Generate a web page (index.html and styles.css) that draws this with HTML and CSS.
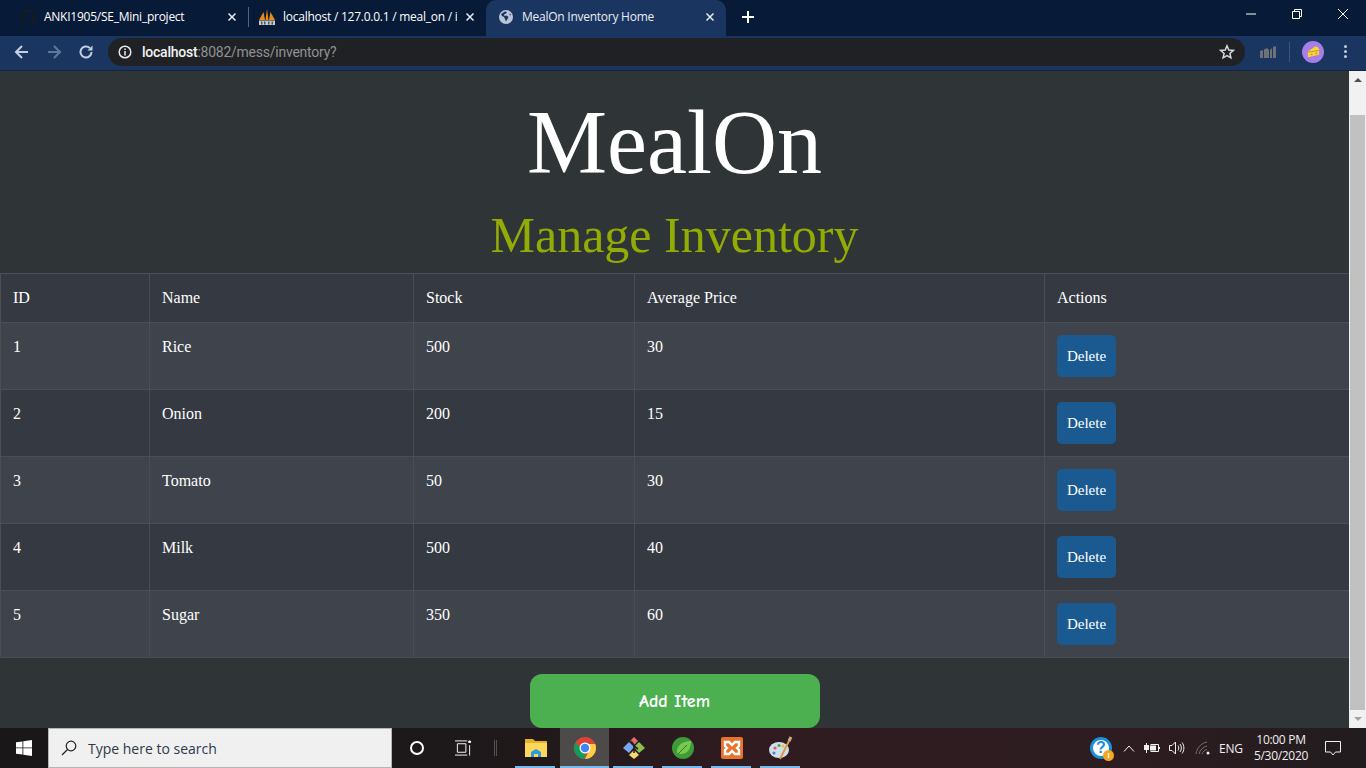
FILE: index.html
```html
<!DOCTYPE html>
<html lang="en">
<head>
<meta charset="utf-8">
<title>MealOn Inventory Home</title>
<link rel="stylesheet" href="styles.css">
</head>
<body>
<div class="screen">
  <header class="tabbar">
    <div class="tab tab-first">
      <svg class="tab-icon" viewBox="0 0 16 16"><path fill="#161b22" d="M8 0a8 8 0 0 0-2.500 15.600c.4.100.5-.2.5-.4v-1.400c-2.200.5-2.700-1-2.700-1-.4-.9-.9-1.200-.9-1.200-.7-.5.100-.5.100-.5.800.100 1.200.8 1.200.8.700 1.200 1.900.9 2.300.7.100-.5.300-.9.500-1.100-1.800-.2-3.600-.9-3.600-4 0-.9.300-1.600.800-2.100-.1-.2-.4-1 .1-2.100 0 0 .7-.2 2.200.8a7.600 7.600 0 0 1 4 0c1.500-1 2.200-.8 2.200-.8.400 1.100.200 1.900.100 2.100.500.600.800 1.300.800 2.100 0 3.100-1.900 3.700-3.700 3.900.300.300.600.800.600 1.500v2.200c0 .2.100.5.600.4A8 8 0 0 0 8 0z"/></svg>
      <span class="tab-title">ANKI1905/SE_Mini_project</span>
      <svg class="tab-close" viewBox="0 0 10 10"><path d="M1.500 1.500l7 7M8.500 1.500l-7 7"/></svg>
    </div>
    <div class="tab-sep"></div>
    <div class="tab tab-second">
      <svg class="tab-icon" viewBox="0 0 16 16"><path fill="#e98a15" d="M0 11 4.500 3 6 11zM6.500 11 8 0l1.500 11zM10 11l1.500-8L16 11z"/><path fill="#c9c9c9" d="M0 11.500h16V16H0z"/><path fill="#4d5462" d="M2 12.500h1.500v3H2zM5 12.500h1.500v3H5zM9 12.500h1.500v3H9zM12.500 12.500H14v3h-1.500z"/></svg>
      <span class="tab-title tab-fade">localhost / 127.0.0.1 / meal_on / i</span>
      <svg class="tab-close" viewBox="0 0 10 10"><path d="M1.500 1.500l7 7M8.500 1.500l-7 7"/></svg>
    </div>
    <div class="tab tab-active">
      <svg class="tab-icon" viewBox="0 0 16 16"><circle cx="8" cy="8" r="7" fill="#b9c6d9"/><path fill="#1a3560" d="M7 2.500 3 5l1 2 2 1 1 2 1 2.500 1.500-2.500 1-2-2-1.500-2 .5-.5-1.500 2-1 1-1.500zM12 4l1 2.500-1.500-.5z"/></svg>
      <span class="tab-title">MealOn Inventory Home</span>
      <svg class="tab-close" viewBox="0 0 10 10"><path d="M1.500 1.500l7 7M8.500 1.500l-7 7"/></svg>
    </div>
    <svg class="new-tab" viewBox="0 0 12 12"><path d="M6 0v12M0 6h12"/></svg>
    <div class="window-controls">
      <svg viewBox="0 0 12 12"><path d="M1 6h10"/></svg>
      <svg viewBox="0 0 12 12"><path d="M1.500 3.500h7v7h-7zM3.500 3.500v-2h7v7h-2"/></svg>
      <svg viewBox="0 0 12 12"><path d="M1 1l10 10M11 1 1 11"/></svg>
    </div>
  </header>

  <nav class="toolbar">
    <svg class="nav-icon" viewBox="0 0 16 16"><path d="M14 8H2.500M8 2 2 8l6 6"/></svg>
    <svg class="nav-icon nav-dim" viewBox="0 0 16 16"><path d="M2 8h11.500M8 2l6 6-6 6"/></svg>
    <svg class="nav-icon" viewBox="0 0 16 16"><path d="M13.500 8A5.500 5.500 0 1 1 11.800 4"/><path class="solid" d="M14.500 1.500v5h-5z"/></svg>
    <div class="omnibox">
      <svg class="info-icon" viewBox="0 0 14 14"><circle cx="7" cy="7" r="5.800"/><path d="M7 6v4.500M7 3.500v1.500"/></svg>
      <span class="url"><b>localhost</b>:8082/mess/inventory?</span>
      <svg class="star-icon" viewBox="0 0 16 16"><path d="M8 1.800 9.800 6l4.500.4-3.400 3 1 4.400L8 11.500l-3.900 2.300 1-4.400-3.400-3L6.200 6z"/></svg>
    </div>
    <svg class="ext-icon" viewBox="0 0 16 12"><path fill="#6d7278" d="M0 5l3-1v8H0zM4 3.500l3-1.500 2 2v8H4zM10 4l2-2v10h-2zM13 1l3-1v12h-3z"/></svg>
    <div class="toolbar-sep"></div>
    <div class="avatar">
      <svg viewBox="0 0 16 16"><path fill="#f5d33c" d="M2 8 10 2.500c2.500.5 4 2 4 4v5l-12 2.500z"/><path fill="#c99a1c" d="M2 8l12-1.500v1L2 9z"/><circle cx="6" cy="11" r="1" fill="#c99a1c"/><circle cx="11" cy="10" r="1" fill="#c99a1c"/></svg>
    </div>
    <div class="kebab"><i></i><i></i><i></i></div>
  </nav>

  <div class="viewport">
    <main class="page">
      <h1 class="brand">MealOn</h1>
      <h2 class="subtitle">Manage Inventory</h2>
      <table class="inventory">
        <colgroup>
          <col class="col-id"><col class="col-name"><col class="col-stock"><col class="col-price"><col class="col-actions">
        </colgroup>
        <thead>
          <tr><th>ID</th><th>Name</th><th>Stock</th><th>Average Price</th><th>Actions</th></tr>
        </thead>
        <tbody>
          <tr><td>1</td><td>Rice</td><td>500</td><td>30</td><td><button class="btn-delete">Delete</button></td></tr>
          <tr><td>2</td><td>Onion</td><td>200</td><td>15</td><td><button class="btn-delete">Delete</button></td></tr>
          <tr><td>3</td><td>Tomato</td><td>50</td><td>30</td><td><button class="btn-delete">Delete</button></td></tr>
          <tr><td>4</td><td>Milk</td><td>500</td><td>40</td><td><button class="btn-delete">Delete</button></td></tr>
          <tr><td>5</td><td>Sugar</td><td>350</td><td>60</td><td><button class="btn-delete">Delete</button></td></tr>
        </tbody>
      </table>
      <div class="add-row"><button class="btn-add">Add Item</button></div>
    </main>
    <aside class="scrollbar">
      <span class="arrow-up"></span>
      <div class="track"><div class="thumb"></div></div>
      <span class="arrow-down"></span>
    </aside>
  </div>

  <footer class="taskbar">
    <div class="start">
      <svg viewBox="0 0 16 16"><path fill="#fff" d="M0 2.300 6.500 1.400v6.100H0zM7.300 1.300 16 0v7.500H7.300zM0 8.300h6.500v6.300L0 13.700zM7.300 8.300H16V16l-8.700-1.200z"/></svg>
    </div>
    <div class="search">
      <svg viewBox="0 0 16 16"><circle cx="10" cy="6" r="4.800"/><path d="M6.500 9.500 1 15"/></svg>
      <span>Type here to search</span>
    </div>
    <div class="cortana"></div>
    <svg class="taskview" viewBox="0 0 18 16"><path d="M0 .5h13M0 15.500h13M2.500 3.500h9v9h-9zM15.500 0v2.500M15.500 5v11"/><path class="thick" d="M14 1.500h3"/></svg>
    <div class="task-sep"></div>
    <div class="apps">
      <div class="app">
        <svg viewBox="0 0 24 24"><path fill="#e9b026" d="M1 3h8l2 2h12v4H1z"/><path fill="#fbd75b" d="M1 7h22v14H1z"/><path fill="#2b9be0" d="M7 16l5-3 5 3v5h-3v-3h-4v3H7z"/></svg>
      </div>
      <div class="app app-active">
        <svg viewBox="0 0 24 24"><circle cx="12" cy="12" r="11" fill="#db4437"/><path fill="#0f9d58" d="M12 23A11 11 0 0 1 2.500 6.500L8 12l4 5z"/><path fill="#ffcd40" d="M12 23A11 11 0 0 0 23 12c0-1.500-.3-3-.8-4H12l3 9z"/><circle cx="12" cy="12" r="5.500" fill="#fff"/><circle cx="12" cy="12" r="4.200" fill="#4285f4"/></svg>
      </div>
      <div class="app">
        <svg viewBox="0 0 24 24"><path fill="#7aa7f5" d="M7 6l5 5-5 6-6-5z"/><path fill="#e96c6c" d="M12 1l4 4-4 4-4-4z"/><path fill="#8cc152" d="M17 6l6 6-6 5-5-6z"/><path fill="#f7d774" d="M12 14l5 5-5 4-5-4z"/><path fill="none" stroke="#222" stroke-width="1.600" d="M9 5l3 4v8M12 10l4 3"/></svg>
      </div>
      <div class="app">
        <svg viewBox="0 0 24 24"><circle cx="12" cy="12" r="11" fill="#3e9b3a"/><path fill="#79c850" d="M6 17C5 10 11 5 20 5c0 8-4 14-11 13z"/><path fill="none" stroke="#2e7d2e" d="M7 18 16 9"/></svg>
      </div>
      <div class="app">
        <svg viewBox="0 0 24 24"><rect x="1" y="1" width="22" height="22" rx="2" fill="#e8742c"/><path fill="none" stroke="#fff" stroke-width="2.400" d="M5 6h4l3 3 3-3h4v4l-2 2 2 2v4h-4l-3-3-3 3H5v-4l2-2-2-2z"/></svg>
      </div>
      <div class="app">
        <svg viewBox="0 0 24 24"><ellipse cx="10" cy="14" rx="10" ry="8" fill="#cfe0ea"/><circle cx="6" cy="12" r="1.600" fill="#e05b5b"/><circle cx="10" cy="9.500" r="1.600" fill="#4aa564"/><circle cx="14" cy="10" r="1.600" fill="#e7c04b"/><circle cx="5" cy="17" r="1.600" fill="#4a86d6"/><path stroke="#d99a4a" stroke-width="2" d="M11 23 21 3"/><path stroke="#c9a98a" stroke-width="3" d="M20 5l2-4"/></svg>
      </div>
    </div>
    <div class="tray">
      <div class="help">?<i>i</i></div>
      <svg class="caret" viewBox="0 0 12 7"><path d="M1 6.500 6 1l5 5.500"/></svg>
      <svg class="plug" viewBox="0 0 16 12"><path d="M6.500 2.500h8v7h-8M15.500 5v2"/><path class="solid" d="M6 3.500h6v5H6zM0 3h2V1h1v2h2v5H3v3H2V8H0z"/></svg>
      <svg class="speaker" viewBox="0 0 16 14"><path d="M.5 4.500h2.500L6.500 1v12L3 9.500H.5zM9 4.500c1 1.500 1 3.500 0 5M11 3c1.800 2.500 1.800 5.500 0 8M13 1.500c2.500 3 2.500 8 0 11"/></svg>
      <svg class="wifi" viewBox="0 0 16 14"><path d="M1 13c1-7 6-11 11-12M4 13c1-4 4-7 8-8M7 13c.5-2 2.500-4 5-4.500"/><circle class="solid" cx="13" cy="12" r="1.500"/></svg>
      <span class="lang">ENG</span>
      <div class="clock"><span>10:00 PM</span><span>5/30/2020</span></div>
      <svg class="notify" viewBox="0 0 16 15"><path d="M.5.500h15v10.500h-5L8 14l-2.500-3H.5z"/></svg>
    </div>
  </footer>
</div>
</body>
</html>
```
FILE: styles.css
```css
* { box-sizing: border-box; }
html, body { margin: 0; height: 100%; overflow: hidden; }
.screen { width: 1366px; height: 768px; display: flex; flex-direction: column; overflow: hidden; font-family: "Liberation Serif", serif; }

/* tab strip */
.tabbar { height: 36px; flex: none; background: #071a38; display: flex; align-items: center; color: #fff; font: 12px/16px "Open Sans", sans-serif; }
.tab { height: 36px; display: flex; align-items: center; position: relative; padding-bottom: 2px; }
.tab-first { width: 248px; padding-left: 20px; }
.tab-second { width: 237px; padding-left: 10px; }
.tab-active { width: 240px; padding-left: 12px; background: #1a3560; border-radius: 10px 10px 0 0; color: #e8edf4; }
.tab-sep { width: 1px; height: 20px; background: #55647c; margin-top: -2px; }
.tab-icon { width: 16px; height: 16px; flex: none; margin-right: 8px; }
.tab-title { flex: 1; white-space: nowrap; overflow: hidden; letter-spacing: -.25px; }
.tab-close { width: 10px; height: 10px; flex: none; margin: 0 11px 0 8px; }
.tab-close path { fill: none; stroke: #e8edf4; stroke-width: 1.500; }
.new-tab { width: 12px; height: 12px; margin-left: 16px; margin-top: -2px; }
.new-tab path { stroke: #fff; stroke-width: 2; fill: none; }
.window-controls { margin-left: auto; display: flex; gap: 34px; padding-right: 17px; margin-top: -8px; }
.window-controls svg { width: 12px; height: 12px; }
.window-controls path { fill: none; stroke: #fff; stroke-width: 1; }

/* toolbar */
.toolbar { height: 35px; flex: none; background: #1a3560; border-bottom: 1px solid #15233c; display: flex; align-items: center; padding: 0 0 3px 14px; }
.nav-icon { width: 16px; height: 16px; flex: none; margin-right: 16px; }
.nav-icon path { fill: none; stroke: #c3cede; stroke-width: 2; }
.nav-icon .solid { fill: #c3cede; stroke: none; }
.nav-dim path { stroke: #5f779c; }
.omnibox { width: 1137px; height: 28px; margin-left: -2px; flex: none; background: #202124; border-radius: 14px; display: flex; align-items: center; padding: 0 10px; color: #8e9195; font: 14px Roboto, sans-serif; }
.info-icon { width: 14px; height: 14px; flex: none; margin-right: 10px; }
.info-icon circle, .info-icon path { fill: none; stroke: #e8eaed; stroke-width: 1.500; }
.url { flex: 1; letter-spacing: -.24px; }
.url b { font-weight: 500; color: #f1f3f4; }
.star-icon { width: 16px; height: 16px; flex: none; }
.star-icon path { fill: none; stroke: #d6d8db; stroke-width: 1.500; }
.ext-icon { width: 16px; height: 12px; flex: none; margin-left: 15px; }
.toolbar-sep { width: 1px; height: 20px; background: #3e5478; margin: 0 12px 0 13px; flex: none; }
.avatar { width: 22px; height: 22px; border-radius: 50%; background: #a77ee8; display: flex; align-items: center; justify-content: center; flex: none; }
.avatar svg { width: 15px; height: 15px; }
.kebab { width: 4px; margin-left: 20px; display: flex; flex-direction: column; gap: 2px; flex: none; }
.kebab i { width: 3px; height: 3px; border-radius: 50%; background: #c3cede; }

/* page */
.viewport { height: 657px; flex: none; display: flex; overflow: hidden; }
.page { width: 1349px; flex: none; background: #2f3437; color: #fff; overflow: hidden; }
.brand { margin: 0; padding-top: 20px; height: 136px; font: 400 90px/104px "Liberation Serif", serif; text-align: center; }
.subtitle { margin: 0; height: 66px; font: 400 50px/56px "Liberation Serif", serif; color: #93ab05; text-align: center; }
.inventory { width: 1349px; table-layout: fixed; border-collapse: collapse; font-size: 16px; line-height: 24px; }
.inventory th, .inventory td { border: 1px solid #4a4e56; padding: 12px; text-align: left; font-weight: 400; vertical-align: top; }
.inventory thead tr, .inventory tbody tr:nth-child(even) { background: #353941; }
.inventory tbody tr:nth-child(odd) { background: #3f434c; }
.col-id { width: 149px; }
.col-name { width: 264px; }
.col-stock { width: 221px; }
.col-price { width: 410px; }
.col-actions { width: 305px; }
.btn-delete { width: 59px; height: 42px; padding: 0; border: 0; border-radius: 5px; background: #1b5a91; color: #fff; font: 15px "Liberation Serif", serif; display: block; }
.add-row { display: flex; justify-content: center; padding-top: 16px; }
.btn-add { width: 290px; height: 54px; border: 0; border-radius: 12px; background: #4caf50; color: #fff; font: 700 18px "Comic Neue", "Comic Sans MS", Lato, sans-serif; }

/* scrollbar */
.scrollbar { width: 17px; flex: none; background: #f1f1f1; display: flex; flex-direction: column; align-items: center; }
.arrow-up, .arrow-down { height: 17px; flex: none; width: 0; border-left: 4px solid transparent; border-right: 4px solid transparent; }
.arrow-up { border-bottom: 4px solid #505050; height: 0; margin: 7px 0 6px; }
.arrow-down { border-top: 4px solid #a3a3a3; height: 0; margin: 6px 0 7px; }
.track { flex: 1; width: 100%; padding-top: 27px; display: flex; justify-content: center; }
.thumb { width: 15px; height: 595px; background: #c1c1c1; }

/* taskbar */
.taskbar { height: 40px; flex: none; display: flex; align-items: center; background: linear-gradient(90deg, #1a1718 0%, #1d1819 35%, #2f1b20 55%, #2c1c20 85%, #211c1e 100%); color: #fff; position: relative; }
.start { width: 48px; height: 40px; display: flex; align-items: center; justify-content: center; flex: none; }
.start svg { width: 16px; height: 16px; }
.search { width: 344px; height: 40px; flex: none; background: #f0f0f0; border: 1px solid #b5b5b5; border-bottom-width: 1px; display: flex; align-items: center; padding-left: 12px; color: #2d3a4a; font: 14px "Open Sans", sans-serif; }
.search svg { width: 16px; height: 16px; margin-right: 11px; }
.search circle, .search path { fill: none; stroke: #222; stroke-width: 1.200; }
.cortana { width: 14px; height: 14px; border: 2px solid #fff; border-radius: 50%; margin-left: 18px; flex: none; }
.taskview { width: 17px; height: 16px; flex: none; margin-left: 31px; }
.taskview path { fill: none; stroke: #fff; stroke-width: 1; }
.taskview .thick { stroke-width: 2; }
.task-sep { width: 3px; height: 16px; border-left: 1px solid #55504f; border-right: 1px solid #55504f; margin-left: 22px; flex: none; }
.apps { display: flex; margin-left: 14px; height: 40px; }
.app { width: 49px; height: 40px; display: flex; align-items: center; justify-content: center; position: relative; }
.app::after { content: ""; position: absolute; left: 4px; right: 5px; bottom: 0; height: 2px; background: #76b9ed; }
.app-active { background: #4d4a4a; }
.app-active::after { left: 0; right: 0; }
.app svg { width: 24px; height: 24px; }
.tray { position: absolute; right: 0; top: 0; height: 40px; display: flex; align-items: center; font: 12px "Open Sans", sans-serif; color: #f0f0f0; }
.help { position: relative; width: 22px; height: 22px; border-radius: 50%; background: #fff; border: 3px solid #1c8fd6; color: #1c8fd6; font: 700 16px/16px "Liberation Sans", sans-serif; text-align: center; margin-right: 11px; }
.help i { position: absolute; right: -5px; bottom: -5px; width: 11px; height: 11px; border-radius: 50%; background: #f5a623; color: #fff; font: 700 8px/11px "Liberation Sans", sans-serif; }
.caret { width: 12px; height: 7px; margin-right: 9px; }
.plug { width: 16px; height: 12px; margin-right: 9px; }
.speaker { width: 16px; height: 14px; margin-right: 10px; }
.wifi { width: 16px; height: 14px; margin-right: 8px; }
.caret path, .plug path, .speaker path { fill: none; stroke: #f0f0f0; stroke-width: 1; }
.wifi path { fill: none; stroke: #77726f; stroke-width: 1; }
.wifi .solid { fill: #f0f0f0; }
.plug .solid { fill: #f0f0f0; stroke: none; }
.lang { width: 26px; margin-right: 6px; letter-spacing: -.2px; }
.clock { width: 60px; display: flex; flex-direction: column; align-items: center; line-height: 16px; letter-spacing: -.3px; }
.notify { width: 16px; height: 15px; margin: 0 25px 0 14px; }
.notify path { fill: none; stroke: #f0f0f0; stroke-width: 1; }
```
